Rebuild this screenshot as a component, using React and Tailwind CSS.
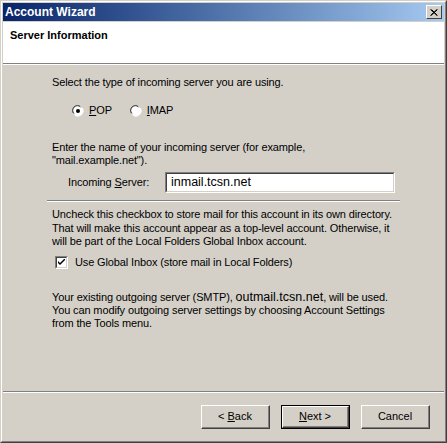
import React from "react";

const font = { fontFamily: '"Liberation Sans", Arial, sans-serif' };

function Radio({ checked }) {
  return (
    <svg width="12" height="12" viewBox="0 0 12 12" className="shrink-0">
      <path d="M1 8 A5.5 5.5 0 0 1 8 1" stroke="#808080" strokeWidth="1" fill="none" />
      <circle cx="6" cy="6" r="5" fill="#ffffff" />
      <path d="M2 8.5 A4.5 4.5 0 0 1 8.5 2" stroke="#404040" strokeWidth="1" fill="none" />
      <path d="M3 10.5 A5.5 5.5 0 0 0 10.5 3" stroke="#ffffff" strokeWidth="1" fill="none" />
      {checked && <circle cx="6" cy="6" r="2" fill="#000000" />}
    </svg>
  );
}

function Btn({ children, def }) {
  return (
    <div
      className={
        "w-[69px] h-[24px] flex items-center justify-center text-[11px] text-black " +
        (def ? "border border-black" : "")
      }
    >
      <div className="w-full h-full border-t border-l border-white border-b border-r border-b-[#404040] border-r-[#404040] flex">
        <div className="flex-1 flex items-center justify-center border-b border-r border-[#808080]">
          {children}
        </div>
      </div>
    </div>
  );
}

export default function App() {
  return (
    <div className="w-[447px] h-[443px] overflow-hidden" style={font}>
      <div className="w-full h-full border border-[#d4d0c8] border-b-[#404040] border-r-[#404040] flex">
        <div className="flex-1 border border-white border-b-[#808080] border-r-[#808080] bg-[#d4d0c8] p-px flex flex-col">
          {/* title bar */}
          <div className="h-[18px] bg-gradient-to-r from-[#0a246a] to-[#a6caf0] flex items-center justify-between pl-[2px] pr-[2px]">
            <span className="text-white font-bold text-[12px] leading-none">Account Wizard</span>
            <div className="w-[16px] h-[14px] bg-[#d4d0c8] border-t border-l border-white border-b border-r border-b-[#404040] border-r-[#404040] flex items-center justify-center">
              <svg width="8" height="7" viewBox="0 0 8 7">
                <path d="M0.5 0.5 L7 6.5 M1.5 0.5 L7.5 6.5 M7 0.5 L0.5 6.5 M7.5 0.5 L1 6.5" stroke="#000" strokeWidth="1" />
              </svg>
            </div>
          </div>
          {/* header */}
          <div className="mt-px h-[42px] bg-white border-b border-[#808080] pl-[7px] pt-[7px]">
            <div className="font-bold text-[11px] leading-[13px] text-black">Server Information</div>
          </div>
          <div className="h-px bg-white" />
          {/* body */}
          <div className="flex-1 flex flex-col text-[11px] leading-[13px] text-black tracking-[-0.13px]">
            <div className="pl-[49px] mt-[11px]">Select the type of incoming server you are using.</div>
            <div className="pl-[69px] mt-[15px] flex items-center h-[13px]">
              <Radio checked />
              <span className="ml-[5px]"><u>P</u>OP</span>
              <span className="ml-[18px]"><Radio /></span>
              <span className="ml-[5px]"><u>I</u>MAP</span>
            </div>
            <div className="pl-[49px] mt-[24px]">
              Enter the name of your incoming server (for example,
              <br />"mail.example.net").
            </div>
            <div className="pl-[65px] mt-[5px] flex items-center">
              <span className="w-[97px]">Incoming <u>S</u>erver:</span>
              <div className="w-[230px] h-[21px] bg-white border border-[#808080] border-b-white border-r-white flex">
                <div className="flex-1 border border-[#404040] border-b-[#d4d0c8] border-r-[#d4d0c8] flex items-center pl-[4px] text-[12.5px] tracking-normal">
                  inmail.tcsn.net
                </div>
              </div>
            </div>
            <div className="ml-[44px] w-[353px] mt-[7px] border-t border-[#808080] border-b border-b-white" />
            <div className="pl-[49px] mt-[6px] leading-[13.5px]">
              Uncheck this checkbox to store mail for this account in its own directory.
              <br />That will make this account appear as a top-level account. Otherwise, it
              <br />will be part of the Local Folders Global Inbox account.
            </div>
            <div className="pl-[52px] mt-[7px] flex items-center">
              <div className="w-[13px] h-[13px] bg-white border border-[#808080] border-b-white border-r-white flex">
                <div className="flex-1 border border-[#404040] border-b-[#d4d0c8] border-r-[#d4d0c8] flex items-center justify-center">
                  <svg width="7" height="7" viewBox="0 0 7 7">
                    <path d="M0 2 L0 4 L2 6 L7 1 L7 -1 L2 4 Z" fill="#000" />
                  </svg>
                </div>
              </div>
              <span className="ml-[7px]">Use Global Inbox (store mail in Local Folders)</span>
            </div>
            <div className="pl-[49px] mt-[22px]">
              Your existing outgoing server (SMTP), <span className="text-[12.5px] tracking-normal">outmail.tcsn.net</span>, will be used.
              <br />You can modify outgoing server settings by choosing Account Settings
              <br />from the Tools menu.
            </div>
            <div className="flex-1" />
            <div className="border-t border-[#808080] border-b border-b-white" />
            <div className="flex justify-end gap-[11px] pr-[14px] pt-[12px] pb-[11px] tracking-normal">
              <Btn><span>&lt;</span><span className="ml-[3px]"><u>B</u>ack</span></Btn>
              <Btn def><span><u>N</u>ext</span><span className="ml-[3px]">&gt;</span></Btn>
              <Btn>Cancel</Btn>
            </div>
          </div>
        </div>
      </div>
    </div>
  );
}
